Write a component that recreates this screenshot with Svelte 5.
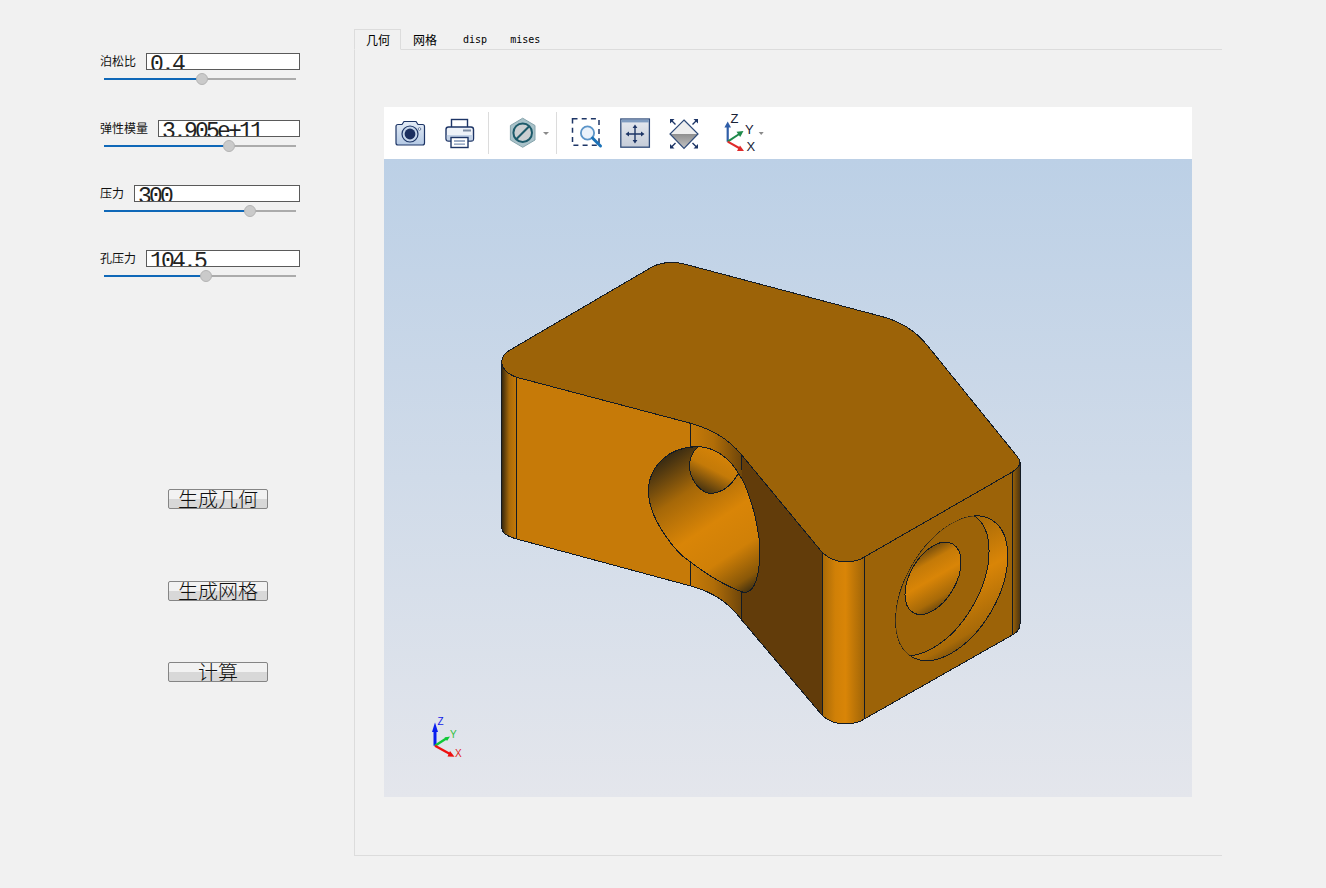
<script lang="ts">
  const fields = [
    { label: '泊松比', value: '0.4', handle: 97.5, cls: 'first' },
    { label: '弹性模量', value: '3.905e+11', handle: 124.5, cls: 'second' },
    { label: '压力', value: '300', handle: 145.5, cls: '' },
    { label: '孔压力', value: '104.5', handle: 101.5, cls: '' }
  ];
  const actions = [
    { label: '生成几何', cls: 'geo' },
    { label: '生成网格', cls: 'mesh' },
    { label: '计算', cls: 'solve' }
  ];
  const tabs = ['几何', '网格', 'disp', 'mises'];

  // outline pieces of the part, in page coordinates
  const topFace =
    'M501.7 361.7 C502 356 505 353 510 350 L652 267 C662 262 675 261 688 265 L880 316 C900 321 915 330 927 345 L1016 455 C1019 459 1020 460 1020 461.7 C1020 466 1017 469 1012.3 472 L864.3 557 C860 560 855 562 845 562 C838 562 830 559 822.7 553 L741.7 455 C727 437 710 429 690.7 423.3 L516.7 377.3 C509 375 502 369 501.7 361.7 Z';
  const mouth =
    'M696.7 446.7 C670 447 648 465 648.3 493.3 C650 520 675 552 690 561.7 C705 573 725 586 743.3 592.3 C755 594 760 575 760 546.7 C757 515 747 485 738.3 473.3 C728 456 712 447 696.7 446.7 Z';
  const bore =
    'M698.3 446.7 C692 452 689 460 689.3 468.3 C692 484 703 494 712 493.3 C725 492 733 483 738.3 473.3 C730 458 714 447 698.3 446.7 Z';
</script>

<div class="page">
  <aside class="side">
    {#each fields as f}
      <div class="field {f.cls}">
        <div class="row">
          <span class="label">{f.label}</span>
          <div class="input">{f.value}</div>
        </div>
        <div class="slider">
          <div class="fill" style="width: {f.handle}px"></div>
          <div class="knob" style="left: {f.handle}px"></div>
        </div>
      </div>
    {/each}
    {#each actions as a}
      <button class="action {a.cls}">{a.label}</button>
    {/each}
  </aside>

  <main class="tabs">
    <div class="tabbar">
      {#each tabs as t, i}
        <div class="tab" class:active={i === 0} class:latin={i > 1}>{t}</div>
      {/each}
    </div>
    <div class="pane">
      <div class="viewer">
        <div class="toolbar">
          <!-- camera -->
          <svg class="ic m9" width="34" height="34" viewBox="393 116 34 34">
            <defs>
              <linearGradient id="camBody" x1="0" y1="0" x2="0" y2="1">
                <stop offset="0" stop-color="#e4ecf6" />
                <stop offset="1" stop-color="#b4c9e4" />
              </linearGradient>
            </defs>
            <path d="M398 124.5 H402 L404 121.5 H416 L418 124.5 H422.5 Q424.5 124.5 424.5 126.5 V143 Q424.5 145 422.5 145 H398 Q396 145 396 143 V126.5 Q396 124.5 398 124.5 Z" fill="url(#camBody)" stroke="#1d3566" stroke-width="1.2" />
            <circle cx="410" cy="134" r="8" fill="#c6d6ea" stroke="#1d3566" stroke-width="1.2" />
            <circle cx="410" cy="134" r="5.4" fill="#1b2f5f" />
            <circle cx="419.5" cy="129" r="1.3" fill="#fff" stroke="#1d3566" stroke-width=".6" />
          </svg>
          <!-- printer -->
          <svg class="ic m16" width="34" height="34" viewBox="443 116 34 34">
            <rect x="451.5" y="119.5" width="16" height="9" fill="#fff" stroke="#1d3566" stroke-width="1.4" />
            <rect x="446" y="127" width="27.5" height="14" rx="2.5" fill="#eef2f8" stroke="#1d3566" stroke-width="1.4" />
            <rect x="446.8" y="135" width="26" height="5.4" fill="#c3d2e6" />
            <rect x="463" y="129.5" width="8" height="2" fill="#7d8ca3" />
            <rect x="451" y="137.5" width="17" height="10" fill="#fff" stroke="#1d3566" stroke-width="1.4" />
            <path d="M454 141 H465 M454 144.2 H465" stroke="#7d93b5" stroke-width="1.3" />
          </svg>
          <div class="sep m11"></div>
          <!-- section plane hex -->
          <svg class="ic m17" width="34" height="34" viewBox="506 116 34 34">
            <polygon points="522.7,118.2 535,125.5 535,140 522.7,147.3 510.4,140 510.4,125.5" fill="#a9c2c9" stroke="#86a4ac" />
            <circle cx="522.7" cy="132.7" r="9.3" fill="#cbcfd1" stroke="#1c5a6a" stroke-width="2" />
            <path d="M516.2 139.2 L529.2 126.2" stroke="#1c5a6a" stroke-width="2" />
          </svg>
          <div class="caret m3"></div>
          <div class="sep m7"></div>
          <!-- zoom box -->
          <svg class="ic m12" width="34" height="34" viewBox="569 116 34 34">
            <rect x="572.5" y="118.8" width="26.5" height="26.5" fill="none" stroke="#1d3566" stroke-width="1.5" stroke-dasharray="5 4.2" />
            <circle cx="587.5" cy="133" r="6.6" fill="#eaf2fb" stroke="#5b94c8" stroke-width="1.8" />
            <path d="M592.5 138 L600.5 146" stroke="#1a72b8" stroke-width="3" stroke-linecap="round" />
          </svg>
          <!-- fit all -->
          <svg class="ic m15" width="34" height="34" viewBox="618 116 34 34">
            <defs>
              <linearGradient id="fitBody" x1="0" y1="0" x2="0" y2="1">
                <stop offset="0" stop-color="#e6eaf0" />
                <stop offset="1" stop-color="#c5ccd8" />
              </linearGradient>
            </defs>
            <rect x="620.8" y="119" width="28.6" height="28.2" fill="url(#fitBody)" stroke="#2e4a78" stroke-width="1.3" />
            <rect x="621.4" y="119.6" width="27.4" height="2.8" fill="#7f9cc0" />
            <path d="M635 126.5 V141.5 M627.5 134 H642.5" stroke="#1d3566" stroke-width="1.4" />
            <path d="M635 124.5 L632.6 128 H637.4 Z M635 143.5 L632.6 140 H637.4 Z M625.5 134 L629 131.6 V136.4 Z M644.5 134 L641 131.6 V136.4 Z" fill="#1d3566" />
          </svg>
          <!-- isometric -->
          <svg class="ic m15" width="34" height="34" viewBox="667 116 34 34">
            <defs>
              <linearGradient id="isoLow" x1="0" y1="0" x2="0" y2="1">
                <stop offset="0" stop-color="#8f8f8f" />
                <stop offset="1" stop-color="#c4c4c4" />
              </linearGradient>
            </defs>
            <polygon points="684,120 698,134 670,134" fill="#eeeeee" />
            <polygon points="670,134 698,134 684,148.5" fill="url(#isoLow)" />
            <polygon points="684,120 698,134 684,148.5 670,134" fill="none" stroke="#2e4a78" stroke-width="1.2" />
            <path d="M671 120 L675.5 124.5 M697 120 L692.5 124.5 M671 147.5 L675.5 143 M697 147.5 L692.5 143" stroke="#1d3566" stroke-width="1.4" />
            <path d="M670 119 H674.5 L670 123.5 Z M698 119 H693.5 L698 123.5 Z M670 148.5 H674.5 L670 144 Z M698 148.5 H693.5 L698 144 Z" fill="#1d3566" />
          </svg>
          <!-- view triad -->
          <svg class="ic m15 open" width="52" height="34" viewBox="716 116 52 34">
            <path d="M727.7 141.7 V126" stroke="#2f5ea8" stroke-width="2.2" />
            <path d="M727.7 121.5 L724.4 127.5 H731 Z" fill="#2f5ea8" />
            <path d="M727.7 141.7 L740 133.5" stroke="#1e8a4a" stroke-width="2" />
            <path d="M743.5 131 L736.5 131.8 L740.2 137 Z" fill="#1e8a4a" />
            <path d="M727.7 141.7 L740 148.5" stroke="#e02a2a" stroke-width="2" />
            <path d="M744 151 L737 151 L740 145.5 Z" fill="#e02a2a" />
            <text class="tri" x="730.5" y="122.5">Z</text>
            <text class="tri" x="745" y="133.5">Y</text>
            <text class="tri" x="746.5" y="151">X</text>
            <path d="M758.7 132 H763.7 L761.2 135 Z" fill="#8a8a8a" />
          </svg>
        </div>

        <svg class="model" width="808" height="638" viewBox="384 159 808 638">
          <defs>
            <linearGradient id="edgeLeft" gradientUnits="userSpaceOnUse" x1="501.7" y1="0" x2="516.7" y2="0">
              <stop offset="0" stop-color="#33260f" />
              <stop offset=".5" stop-color="#a96a09" />
              <stop offset="1" stop-color="#c67a08" />
            </linearGradient>
            <linearGradient id="fillet" gradientUnits="userSpaceOnUse" x1="690.7" y1="0" x2="741.7" y2="0">
              <stop offset="0" stop-color="#c67a08" />
              <stop offset=".45" stop-color="#b06d08" />
              <stop offset="1" stop-color="#6f460a" />
            </linearGradient>
            <linearGradient id="column" gradientUnits="userSpaceOnUse" x1="822.7" y1="0" x2="864.3" y2="0">
              <stop offset="0" stop-color="#a86a08" />
              <stop offset=".3" stop-color="#d08007" />
              <stop offset=".55" stop-color="#d98507" />
              <stop offset="1" stop-color="#a06508" />
            </linearGradient>
            <linearGradient id="edgeRight" gradientUnits="userSpaceOnUse" x1="1012.3" y1="0" x2="1020" y2="0">
              <stop offset="0" stop-color="#9c6308" />
              <stop offset="1" stop-color="#4c3410" />
            </linearGradient>
            <linearGradient id="mouthShade" gradientUnits="userSpaceOnUse" x1="666" y1="458" x2="755" y2="592">
              <stop offset="0" stop-color="#3b2c12" />
              <stop offset=".25" stop-color="#a66808" />
              <stop offset=".5" stop-color="#d98507" />
              <stop offset=".72" stop-color="#d08007" />
              <stop offset=".9" stop-color="#8a5808" />
              <stop offset="1" stop-color="#2e2512" />
            </linearGradient>
            <linearGradient id="boreShade" gradientUnits="userSpaceOnUse" x1="722" y1="448" x2="698" y2="494">
              <stop offset="0" stop-color="#d98507" />
              <stop offset=".45" stop-color="#c47a08" />
              <stop offset="1" stop-color="#2e2512" />
            </linearGradient>
            <linearGradient id="ringShade" gradientUnits="userSpaceOnUse" x1="991.3" y1="519.7" x2="912.1" y2="656.9">
              <stop offset="0" stop-color="#2e2512" />
              <stop offset=".2" stop-color="#a86a08" />
              <stop offset=".5" stop-color="#d98507" />
              <stop offset=".8" stop-color="#a86a08" />
              <stop offset="1" stop-color="#2e2512" />
            </linearGradient>
            <linearGradient id="holeShade" gradientUnits="userSpaceOnUse" x1="952.8" y1="544" x2="913.2" y2="612.6">
              <stop offset="0" stop-color="#2e2512" />
              <stop offset=".3" stop-color="#c47a08" />
              <stop offset=".5" stop-color="#d98507" />
              <stop offset=".75" stop-color="#a86a08" />
              <stop offset="1" stop-color="#2e2512" />
            </linearGradient>
            <clipPath id="ringClip">
              <ellipse cx="951.7" cy="588.3" rx="79.2" ry="45.8" transform="rotate(-60 951.7 588.3)" />
            </clipPath>
          </defs>

          <g class="part">
            <path d="M741.7 455 L822.7 553 V716 L741.7 620 Z" fill="#623c0a" />
            <path d="M501.7 361.7 C502 369 509 375 516.7 377.3 V539 C509 537 502 534 501.7 528 Z" fill="url(#edgeLeft)" />
            <path d="M516.7 377.3 L690.7 423.3 V586 L516.7 539 Z" fill="#c67a08" />
            <path d="M690.7 423.3 C710 429 727 437 741.7 455 V620 C727 600 710 591 690.7 586 Z" fill="url(#fillet)" />
            <path d="M822.7 553 C830 559 838 562 845 562 C855 562 860 560 864.3 557 V719 C860 722 853 724 845 724 C838 724 830 722 822.7 716 Z" fill="url(#column)" />
            <path d="M864.3 557 L1012.3 472 V635 L864.3 719 Z" fill="#9c6308" />
            <path d="M1012.3 472 C1017 469 1020 466 1020 461.7 V624 C1020 630 1016 633 1012.3 635 Z" fill="url(#edgeRight)" />
            <path d={topFace} fill="#9c6308" />

            <path d="M516.7 377.3 V539 M690.7 423.3 V447 M690.7 561 V586 M741.7 455 V470 M741.7 592 V620 M822.7 553 V716 M864.3 557 V719 M1012.3 472 V635 M501.7 361.7 V528 M1020 461.7 V624" class="line" />
            <path d={topFace} class="line" />
            <path d="M501.7 528 C502 534 509 537 516.7 539 L690.7 586 C710 591 727 600 741.7 620 L822.7 716 C830 722 838 724 845 724 C853 724 860 722 864.3 719 L1012.3 635 C1016 633 1020 630 1020 624" class="line" />

            <path d={mouth} fill="url(#mouthShade)" class="line" />
            <path d={bore} fill="url(#boreShade)" class="line" />

            <ellipse cx="951.7" cy="588.3" rx="79.2" ry="45.8" transform="rotate(-60 951.7 588.3)" fill="url(#ringShade)" class="line" />
            <g clip-path="url(#ringClip)">
              <ellipse cx="933" cy="583.3" rx="79.2" ry="45.8" transform="rotate(-60 933 583.3)" fill="#9c6308" class="line" />
            </g>
            <ellipse cx="933" cy="578.3" rx="39.6" ry="22.9" transform="rotate(-60 933 578.3)" fill="url(#holeShade)" class="line" />
          </g>

          <!-- corner triad -->
          <path d="M435 745.7 V730" stroke="#0a1ef0" stroke-width="3" />
          <path d="M435 722.5 L432 732 H438 Z" fill="#0a1ef0" />
          <path d="M435 745.7 L447 738" stroke="#10c838" stroke-width="2.4" />
          <path d="M450 736.5 L444.5 737.5 L447 741 Z" fill="#10c838" />
          <path d="M435 745.7 L450 754" stroke="#ee1010" stroke-width="2.4" />
          <path d="M454.5 756.7 L447.5 756.5 L450 751 Z" fill="#ee1010" />
          <text class="mini" x="437.5" y="725" fill="#1020e8">Z</text>
          <text class="mini" x="450" y="737.5" fill="#30c040">Y</text>
          <text class="mini" x="455" y="757" fill="#e02020">X</text>
        </svg>
      </div>
    </div>
  </main>
</div>

<style>
  :global(body) {
    margin: 0;
    background: #f1f1f1;
  }

  .page {
    display: flex;
    width: 1326px;
    height: 888px;
    overflow: hidden;
    background: #f1f1f1;
    font-family: "Noto Sans CJK SC", "Liberation Sans", sans-serif;
    color: #111;
  }

  .side {
    display: flex;
    flex-direction: column;
    align-items: flex-start;
    width: 200px;
    margin-left: 100px;
    padding-top: 53px;
    margin-right: 54px;
  }

  .field {
    width: 200px;
    margin-bottom: 30px;
  }

  .field.first {
    margin-bottom: 32px;
  }

  .row {
    display: flex;
    align-items: center;
    gap: 10px;
    height: 17px;
  }

  .label {
    flex: none;
    padding-bottom: 2px;
    font-size: 12px;
    line-height: 15px;
  }

  .input {
    flex: 1;
    box-sizing: border-box;
    height: 17px;
    padding-left: 3px;
    overflow: hidden;
    border: 1px solid #5a5a5a;
    background: #fff;
    font-family: "Liberation Mono", monospace;
    font-size: 23px;
    letter-spacing: -2.8px;
    line-height: 23px;
    color: #222;
  }

  .slider {
    position: relative;
    height: 18px;
    width: 192px;
    margin-left: 4px;
  }

  .slider::before {
    content: '';
    position: absolute;
    left: 0;
    right: 0;
    top: 8px;
    height: 2px;
    background: #ababab;
  }

  .fill {
    position: absolute;
    left: 0;
    top: 8px;
    height: 2px;
    background: #0f68b8;
  }

  .knob {
    position: absolute;
    top: 3px;
    width: 10px;
    height: 10px;
    margin-left: -6px;
    border: 1px solid #b4b4b4;
    border-radius: 50%;
    background: #cacaca;
  }

  .action {
    box-sizing: border-box;
    width: 100px;
    height: 20px;
    margin-left: 68px;
    padding: 0;
    overflow: hidden;
    border: 1px solid #858585;
    border-radius: 2px;
    background: linear-gradient(#f2f2f2 0 50%, #d8d8d8 50% 100%);
    font-family: "Noto Sans CJK SC", "Liberation Sans", sans-serif;
    font-size: 20px;
    font-weight: 300;
    line-height: 18px;
    color: #111;
  }

  .action.geo {
    margin-top: 174px;
  }

  .action.mesh {
    margin-top: 72px;
  }

  .action.solve {
    margin-top: 61px;
  }

  .tabs {
    display: flex;
    flex-direction: column;
    width: 868px;
    padding-top: 29px;
  }

  .tabbar {
    display: flex;
    height: 20px;
  }

  .tab {
    box-sizing: border-box;
    height: 21px;
    padding: 0 12px;
    font-size: 12px;
    line-height: 21px;
    color: #000;
  }

  .tab.active {
    padding: 0 10px 0 11px;
    border: 1px solid #dcdcdc;
    border-bottom: 1px solid #f1f1f1;
    line-height: 19px;
    position: relative;
    z-index: 1;
  }

  .tab.latin {
    padding: 0 9px 0 14px;
    font-family: "DejaVu Sans Mono", monospace;
    font-size: 10px;
    line-height: 22px;
  }

  .pane {
    box-sizing: border-box;
    height: 807px;
    padding: 57px 0 0 29px;
    border: 1px solid #dcdcdc;
    border-right: none;
  }

  .viewer {
    width: 808px;
  }

  .toolbar {
    display: flex;
    align-items: center;
    height: 52px;
    background: #fff;
  }

  .ic {
    flex: none;
    display: block;
  }

  .open {
    overflow: visible;
  }

  .sep {
    flex: none;
    width: 1px;
    height: 42px;
    background: #dcdcdc;
  }

  .caret {
    flex: none;
    width: 0;
    height: 0;
    border-left: 3px solid transparent;
    border-right: 3px solid transparent;
    border-top: 3px solid #8a8a8a;
  }

  .m3 { margin-left: 3px; }
  .m7 { margin-left: 7px; }
  .m9 { margin-left: 9px; }
  .m11 { margin-left: 11px; }
  .m12 { margin-left: 12px; }
  .m15 { margin-left: 15px; }
  .m16 { margin-left: 16px; }
  .m17 { margin-left: 17px; }

  .tri {
    font-family: "Liberation Sans", sans-serif;
    font-size: 13px;
    fill: #1a2236;
  }

  .model {
    display: block;
    background: linear-gradient(#bcd0e6, #e4e6ec);
  }

  .part {
    shape-rendering: crispEdges;
  }

  .line {
    stroke: #131b24;
    stroke-width: 1;
  }

  path.line:not([fill]) {
    fill: none;
  }

  .mini {
    font-family: "Liberation Sans", sans-serif;
    font-size: 10px;
  }
</style>
